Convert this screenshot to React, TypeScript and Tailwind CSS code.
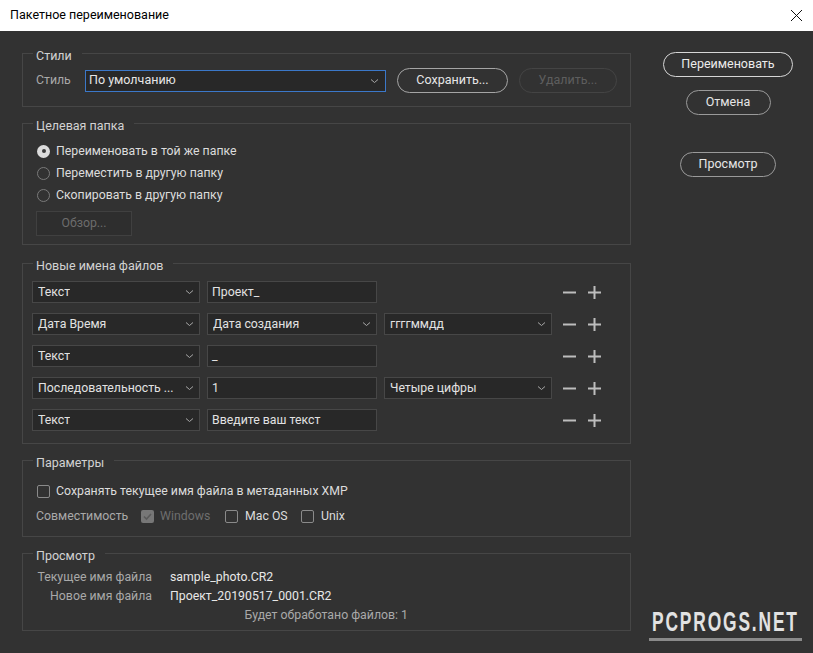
import { ReactNode } from 'react';

const Chevron = () => (
    <svg width="9" height="6" viewBox="0 0 9 6" className="shrink-0">
        <path d="M1 1.5l3.5 3 3.5-3" fill="none" stroke="#a8a8a8" strokeWidth="1" />
    </svg>
);

const Group = ({ title, className, children }: { title: string; className: string; children: ReactNode }) => (
    <section className={`relative border border-[#464646] ${className}`}>
        <span className="absolute left-[10px] -top-[7px] bg-[#323232] pl-[3px] pr-[10px] text-[12.5px] leading-[18px] text-[#d2d2d2] whitespace-nowrap">
            {title}
        </span>
        {children}
    </section>
);

const Select = ({ value, className }: { value: string; className: string }) => (
    <div
        className={`flex items-center justify-between h-[22px] bg-[#282828] border border-[#474747] pl-[5px] pr-[5px] text-[12.3px] text-[#e2e2e2] ${className}`}
    >
        <span className="truncate">{value}</span>
        <Chevron />
    </div>
);

const Input = ({ value }: { value: string }) => (
    <div className="flex items-center h-[22px] w-[170px] bg-[#282828] border border-[#474747] pl-[4px] text-[12.3px] text-[#e2e2e2]">
        {value}
    </div>
);

const PillButton = ({ label, className }: { label: string; className: string }) => (
    <button className={`flex items-center justify-center h-[25px] rounded-full border text-[12.5px] ${className}`}>
        {label}
    </button>
);

const Radio = ({ checked, label }: { checked?: boolean; label: string }) => (
    <div className="flex items-center h-[22px] gap-[6px]">
        {checked ? (
            <span className="w-[13px] h-[13px] rounded-full bg-[#dcdcdc] flex items-center justify-center">
                <span className="w-[4px] h-[4px] rounded-full bg-[#3a3a3a]" />
            </span>
        ) : (
            <span className="w-[13px] h-[13px] rounded-full border border-[#7a7a7a]" />
        )}
        <span className="text-[12.3px] text-[#dcdcdc] whitespace-nowrap">{label}</span>
    </div>
);

const Checkbox = ({ checked, disabled }: { checked?: boolean; disabled?: boolean }) =>
    checked ? (
        <span className={`w-[13px] h-[13px] rounded-[2px] flex items-center justify-center ${disabled ? 'bg-[#777777]' : 'bg-[#dcdcdc]'}`}>
            <svg width="11" height="11" viewBox="0 0 11 11">
                <path d="M2 5.5l2.5 2.5 4.5-5" fill="none" stroke="#5a5a5a" strokeWidth="1.6" />
            </svg>
        </span>
    ) : (
        <span className="w-[13px] h-[13px] rounded-[2px] border border-[#8a8a8a]" />
    );

const MinusPlus = () => (
    <div className="flex items-center gap-[12px] ml-[11px]">
        <svg width="13" height="13" viewBox="0 0 13 13">
            <path d="M0 6.5h13" stroke="#bdbdbd" strokeWidth="2" />
        </svg>
        <svg width="13" height="13" viewBox="0 0 13 13">
            <path d="M0 6.5h13M6.5 0v13" stroke="#bdbdbd" strokeWidth="2" />
        </svg>
    </div>
);

interface NameRow {
    kind: string;
    second: { type: 'input' | 'select'; value: string };
    third?: string;
}

const rows: NameRow[] = [
    { kind: 'Текст', second: { type: 'input', value: 'Проект_' } },
    { kind: 'Дата Время', second: { type: 'select', value: 'Дата создания' }, third: 'ггггммдд' },
    { kind: 'Текст', second: { type: 'input', value: '_' } },
    { kind: 'Последовательность ...', second: { type: 'input', value: '1' }, third: 'Четыре цифры' },
    { kind: 'Текст', second: { type: 'input', value: 'Введите ваш текст' } },
];

export default function App() {
    return (
        <div className="relative w-[813px] h-[653px] bg-[#323232] overflow-hidden font-['Roboto','Noto_Sans',sans-serif]">
            <header className="flex items-center justify-between h-[31px] bg-white pl-[10px] pr-[10px]">
                <span className="text-[12.5px] text-black">Пакетное переименование</span>
                <svg width="13" height="13" viewBox="0 0 13 13">
                    <path d="M1 1l11 11M12 1L1 12" stroke="#111" strokeWidth="1" />
                </svg>
            </header>

            <div className="flex pl-[22px] pt-[22px]">
                <div className="flex flex-col w-[609px]">
                    <Group title="Стили" className="h-[54px] pt-[14px] pl-[13px]">
                        <div className="flex items-center h-[25px]">
                            <span className="w-[49px] text-[12.3px] text-[#a9a9a9]">Стиль</span>
                            <div className="flex items-center justify-between w-[301px] h-[22px] bg-[#282828] border border-[#3b78c9] pl-[3px] pr-[6px] text-[12.5px] text-[#e6e6e6]">
                                <span>По умолчанию</span>
                                <Chevron />
                            </div>
                            <PillButton label="Сохранить..." className="ml-[11px] w-[111px] border-[#a5a5a5] text-[#e6e6e6]" />
                            <PillButton label="Удалить..." className="ml-[11px] w-[98px] border-[#444444] text-[#5e5e5e]" />
                        </div>
                    </Group>

                    <Group title="Целевая папка" className="mt-[16px] h-[122px] pt-[16px] pl-[14px]">
                        <Radio checked label="Переименовать в той же папке" />
                        <Radio label="Переместить в другую папку" />
                        <Radio label="Скопировать в другую папку" />
                        <button className="mt-[5px] -ml-[1px] w-[96px] h-[25px] bg-[#2e2e2e] border border-[#404040] text-[12.3px] text-[#6c6c6c]">
                            Обзор...
                        </button>
                    </Group>

                    <Group title="Новые имена файлов" className="mt-[18px] h-[181px] pt-[17px] pl-[9px]">
                        <div className="flex flex-col gap-[10px]">
                            {rows.map((row, i) => (
                                <div key={i} className="flex items-center h-[22px]">
                                    <Select value={row.kind} className="w-[168px]" />
                                    <div className="ml-[7px]">
                                        {row.second.type === 'input' ? (
                                            <Input value={row.second.value} />
                                        ) : (
                                            <Select value={row.second.value} className="w-[170px]" />
                                        )}
                                    </div>
                                    {row.third ? (
                                        <Select value={row.third} className="ml-[7px] w-[168px]" />
                                    ) : (
                                        <div className="ml-[7px] w-[168px]" />
                                    )}
                                    <MinusPlus />
                                </div>
                            ))}
                        </div>
                    </Group>

                    <Group title="Параметры" className="mt-[16px] h-[77px] pt-[19px] pl-[14px]">
                        <div className="flex items-center h-[22px] gap-[6px]">
                            <Checkbox />
                            <span className="text-[12.3px] text-[#dcdcdc] whitespace-nowrap">
                                Сохранять текущее имя файла в метаданных XMP
                            </span>
                        </div>
                        <div className="flex items-center h-[22px] mt-[3px] -ml-[1px] text-[12.3px] whitespace-nowrap">
                            <span className="w-[105px] text-[#a9a9a9]">Совместимость</span>
                            <Checkbox checked disabled />
                            <span className="ml-[6px] w-[65px] text-[#6e6e6e]">Windows</span>
                            <Checkbox />
                            <span className="ml-[7px] w-[56px] text-[#dcdcdc]">Mac OS</span>
                            <Checkbox />
                            <span className="ml-[7px] text-[#dcdcdc]">Unix</span>
                        </div>
                    </Group>

                    <Group title="Просмотр" className="mt-[16px] h-[78px] pt-[14px] pl-[13px]">
                        <div className="flex items-center h-[19px] text-[12.3px] whitespace-nowrap">
                            <span className="w-[116px] text-right text-[#a9a9a9]">Текущее имя файла</span>
                            <span className="ml-[18px] text-[#e8e8e8]">sample_photo.CR2</span>
                        </div>
                        <div className="flex items-center h-[19px] text-[12.3px] whitespace-nowrap">
                            <span className="w-[116px] text-right text-[#a9a9a9]">Новое имя файла</span>
                            <span className="ml-[18px] text-[#e8e8e8]">Проект_20190517_0001.CR2</span>
                        </div>
                        <div className="flex items-center h-[19px] w-[372px] justify-end text-[12.3px] text-[#a9a9a9] whitespace-nowrap">
                            Будет обработано файлов: 1
                        </div>
                    </Group>
                </div>

                <div className="flex flex-col items-center w-[130px] ml-[32px] -mt-[1px]">
                    <PillButton label="Переименовать" className="w-[130px] border-[#d6d6d6] text-[#ececec]" />
                    <PillButton label="Отмена" className="mt-[13px] w-[85px] border-[#9a9a9a] text-[#e6e6e6]" />
                    <PillButton label="Просмотр" className="mt-[37px] w-[96px] border-[#9a9a9a] text-[#e6e6e6]" />
                </div>
            </div>

            <div className="absolute left-[649px] top-[606px] w-[153px] flex flex-col items-center">
                <span className="block whitespace-nowrap font-['Liberation_Sans',sans-serif] font-bold text-[28px] leading-[32px] tracking-[3px] text-[#e2e2e2] scale-x-[0.62] origin-center">
                    PCPROGS.NET
                </span>
                <div className="w-[153px] h-[3px] bg-[#8a8a8a]" />
            </div>
        </div>
    );
}
